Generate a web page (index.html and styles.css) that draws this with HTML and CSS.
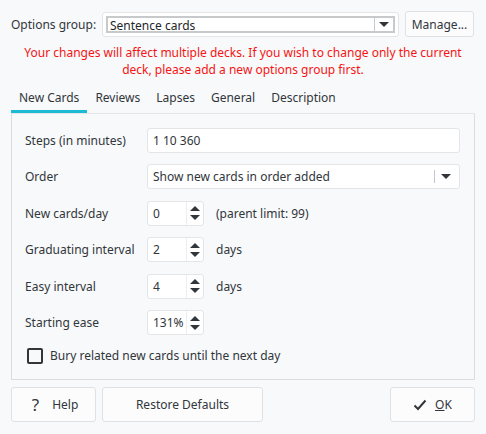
FILE: index.html
```html
<!DOCTYPE html>
<html>
<head>
<meta charset="utf-8">
<link rel="stylesheet" href="styles.css">
</head>
<body>
<div class="dialog">
  <div class="toprow">
    <span class="toplabel">Options group:</span>
    <div class="groupcombo">
      <div class="groupfield">Sentence cards</div>
      <div class="grouparrow"><span class="tri"></span></div>
    </div>
    <div class="btn manage">Manage...</div>
  </div>
  <div class="warning">Your changes will affect multiple decks. If you wish to change only the current<br>deck, please add a new options group first.</div>
  <div class="tabs">
    <div class="tab active">New Cards</div>
    <div class="tab">Reviews</div>
    <div class="tab">Lapses</div>
    <div class="tab">General</div>
    <div class="tab">Description</div>
  </div>
  <div class="panel">
    <div class="row">
      <span class="label">Steps (in minutes)</span>
      <div class="field wide">1 10 360</div>
    </div>
    <div class="row">
      <span class="label">Order</span>
      <div class="field wide combo">
        <span class="ctext">Show new cards in order added</span>
        <span class="csep"></span><span class="tri"></span>
      </div>
    </div>
    <div class="row">
      <span class="label">New cards/day</span>
      <div class="spin"><span class="sval">0</span><span class="arrows"><span class="up"></span><span class="down"></span></span></div>
      <span class="after">(parent limit: 99)</span>
    </div>
    <div class="row">
      <span class="label">Graduating interval</span>
      <div class="spin"><span class="sval">2</span><span class="arrows"><span class="up"></span><span class="down"></span></span></div>
      <span class="after">days</span>
    </div>
    <div class="row">
      <span class="label">Easy interval</span>
      <div class="spin"><span class="sval">4</span><span class="arrows"><span class="up"></span><span class="down"></span></span></div>
      <span class="after">days</span>
    </div>
    <div class="row">
      <span class="label">Starting ease</span>
      <div class="spin"><span class="sval">131%</span><span class="arrows"><span class="up"></span><span class="down"></span></span></div>
    </div>
    <div class="checkrow">
      <span class="checkbox"></span>
      <span>Bury related new cards until the next day</span>
    </div>
  </div>
  <div class="buttons">
    <div class="btn big help"><span class="q">?</span><span>Help</span></div>
    <div class="btn big restore">Restore Defaults</div>
    <div class="spacer"></div>
    <div class="btn big ok">
      <svg width="14" height="12" viewBox="0 0 14 12"><path d="M1.5 6.5 L5 10 L12.5 1.5" fill="none" stroke="#31363b" stroke-width="2"/></svg>
      <span><u>O</u>K</span>
    </div>
  </div>
</div>
</body>
</html>
```
FILE: styles.css
```css
* { box-sizing: border-box; }
html, body { margin: 0; padding: 0; }
body {
  background: #f8f9fa;
  font-family: "Noto Sans", "DejaVu Sans", sans-serif;
  font-size: 12px;
  color: #31363b;
  width: 486px;
  height: 434px;
  overflow: hidden;
  white-space: nowrap;
}
.dialog { padding: 11px 11px 0 11px; }
.toprow { display: flex; align-items: center; height: 26px; }
.toplabel { width: 91px; flex-shrink: 0; }
.groupcombo {
  width: 297px; height: 25px;
  flex-shrink: 0;
  background: #fff;
  border: 1px solid #e3e5e7;
  border-radius: 3px;
  padding: 3px;
  display: flex;
}
.groupfield {
  flex: 1;
  border: 2px solid #c8c9ca;
  border-right: none;
  line-height: 15px;
  padding-left: 2px;
  color: #232629;
}
.grouparrow {
  width: 21px;
  border: 2px solid #c8c9ca;
  border-left: 1px solid #c8c9ca;
  display: flex; align-items: center; justify-content: center;
}
.tri {
  width: 0; height: 0;
  border-left: 5px solid transparent;
  border-right: 5px solid transparent;
  border-top: 5px solid #31363b;
}
.btn {
  background: #fcfcfd;
  border: 1px solid #dfe1e3;
  border-radius: 3px;
  display: flex; align-items: center; justify-content: center;
  flex-shrink: 0;
}
.manage { margin-left: 6px; width: 69px; height: 26px; }
.warning {
  color: #f51414;
  text-align: center;
  line-height: 17px;
  margin: 7px -11px 0 -11px;
}
.tabs { display: flex; margin-top: 8px; height: 27px; }
.tab {
  padding: 0 8px;
  line-height: 24px;
  border-bottom: 3px solid transparent;
}
.tab.active { border-bottom-color: #1cbbd3; }
.panel {
  border: 1px solid #dadcde;
  border-top-color: #e4e6e8;
  height: 267px;
  padding: 7.75px 13px 0 13px;
  background: #f8f9fa;
}
.row { display: flex; align-items: center; height: 36.5px; }
.label { width: 122px; flex-shrink: 0; }
.field {
  height: 25px;
  background: #fff;
  border: 1px solid #e3e5e7;
  border-radius: 3px;
  line-height: 23px;
  padding-left: 5px;
  flex-shrink: 0;
}
.wide { width: 313px; }
.combo { display: flex; align-items: center; }
.ctext { flex: 1; }
.csep { width: 1px; height: 13px; background: #c4c6c8; margin-right: 6px; }
.combo .tri { margin-right: 8px; }
.spin {
  width: 57px; height: 25px;
  flex-shrink: 0;
  background: #fff;
  border: 1px solid #e3e5e7;
  border-radius: 3px;
  display: flex;
}
.sval { flex: 1; line-height: 23px; padding-left: 5px; }
.arrows {
  width: 17px;
  border-left: 1px solid #eceef0;
  display: flex; flex-direction: column; align-items: center; justify-content: center;
  gap: 4px;
}
.up {
  width: 0; height: 0;
  border-left: 5px solid transparent;
  border-right: 5px solid transparent;
  border-bottom: 5px solid #31363b;
}
.down {
  width: 0; height: 0;
  border-left: 5px solid transparent;
  border-right: 5px solid transparent;
  border-top: 5px solid #31363b;
}
.after { margin-left: 12px; }
.checkrow { display: flex; align-items: center; margin-top: 5px; height: 20px; }
.checkbox {
  width: 16px; height: 16px;
  border: 2px solid #31363b;
  border-radius: 2px;
  margin-left: 2px;
  margin-right: 7px;
  flex-shrink: 0;
}
.buttons { display: flex; margin-top: 7px; height: 35px; }
.big { height: 35px; }
.help { width: 85px; gap: 13px; padding-left: 3px; }
.q { font-size: 17px; color: #31363b; }
.restore { width: 161px; margin-left: 6px; }
.spacer { flex: 1; }
.ok { width: 85px; gap: 8px; }
```
